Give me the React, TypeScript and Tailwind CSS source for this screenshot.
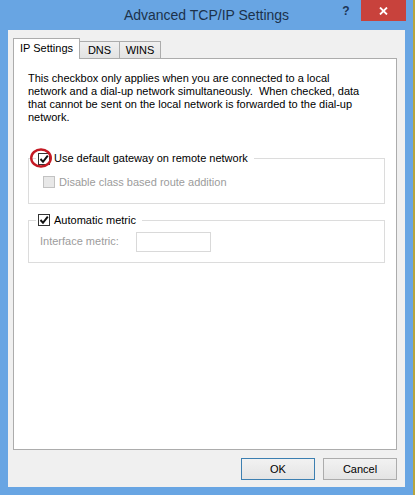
import React from 'react';

const FONT = { fontFamily: '"Liberation Sans", Arial, sans-serif' };

function Box({ checked, disabled }: { checked?: boolean; disabled?: boolean }) {
  return (
    <span
      className={`w-[12px] h-[12px] shrink-0 border flex items-center justify-center ${
        disabled ? 'border-[#c2c2c2] bg-[#e8e8e8]' : 'border-[#333333] bg-white'
      }`}
    >
      {checked && (
        <svg width="10" height="10" viewBox="0 0 10 10">
          <path d="M1.5 5 L4 7.8 L8.8 1.6" stroke="#111" strokeWidth="2" fill="none" />
        </svg>
      )}
    </span>
  );
}

export default function App() {
  return (
    <div className="w-[415px] h-[495px] flex bg-[#b7a53c] text-[11px] text-black" style={FONT}>
      <div className="w-[413px] h-full flex flex-col bg-[#68a5e3]">
        {/* title bar */}
        <div className="h-[30px] shrink-0 grid grid-cols-[1fr_auto_1fr]">
          <div />
          <div className="pt-[7px] text-[14px] leading-[16px] text-[#1c324b]">Advanced TCP/IP Settings</div>
          <div className="flex justify-end items-start pr-[7px]">
            <div className="w-[26px] h-[21px] flex items-center justify-center text-[12px] font-bold text-[#1d3557] mr-[2px] pt-[1px]">?</div>
            <div className="w-[45px] h-[21px] bg-[#c8423c] flex items-center justify-center">
              <svg width="9" height="8" viewBox="0 0 9 8">
                <path d="M1 0.5 L8 7.5 M8 0.5 L1 7.5" stroke="#fff" strokeWidth="1.8" />
              </svg>
            </div>
          </div>
        </div>

        {/* client */}
        <div className="flex-1 mx-[8px] mb-[8px] bg-[#f0f0f0] flex flex-col pt-[8px] pl-[5px] pr-[8px]">
          <div className="h-[20px] flex items-end">
            <div className="w-[67px] h-[21px] -mb-px relative z-10 bg-white border border-b-0 border-[#acacac] flex items-center justify-center pb-[1px]">
              IP Settings
            </div>
            <div className="w-[40px] h-[17px] bg-gradient-to-b from-[#f0f0f0] to-[#e3e3e3] border-t border-r border-[#acacac] flex items-center justify-center pt-[1px]">
              DNS
            </div>
            <div className="w-[41px] h-[17px] bg-gradient-to-b from-[#f0f0f0] to-[#e3e3e3] border-t border-r border-[#acacac] flex items-center justify-center pt-[1px]">
              WINS
            </div>
          </div>

          <div className="h-[392px] bg-white border border-[#acacac] pt-[13px] pl-[14px] pr-[11px]">
            <p className="leading-[13px] whitespace-pre">
              {'This checkbox only applies when you are connected to a local\n'}
              {'network and a dial-up network simultaneously.  When checked, data\n'}
              {'that cannot be sent on the local network is forwarded to the dial-up\n'}
              {'network.'}
            </p>

            <fieldset className="mt-[28px] border border-[#dcdcdc] p-0 m-0 min-w-0">
              <legend className="ml-[7px] px-[2px] flex items-center h-[13px]">
                <span className="relative flex">
                  <Box checked />
                  <svg
                    className="absolute left-[-8px] top-[-6px]"
                    width="24"
                    height="22"
                    viewBox="0 0 24 22"
                  >
                    <ellipse cx="11" cy="11" rx="9.8" ry="8.5" stroke="#c41a24" strokeWidth="2.4" fill="none" />
                  </svg>
                </span>
                <span className="ml-[4px] pr-[4px]">Use default gateway on remote network</span>
              </legend>
              <div className="flex items-center pl-[14px] pt-[9px] pb-[12px] text-[#9c9c9c]">
                <Box disabled />
                <span className="ml-[4px]">Disable class based route addition</span>
              </div>
            </fieldset>

            <fieldset className="mt-[10px] border border-[#dcdcdc] p-0 m-0 min-w-0">
              <legend className="ml-[7px] px-[2px] flex items-center h-[13px]">
                <Box checked />
                <span className="ml-[4px] pr-[4px]">Automatic metric</span>
              </legend>
              <div className="flex items-center pl-[11px] pt-[5px] pb-[10px] text-[#9c9c9c]">
                <span className="w-[96px]">Interface metric:</span>
                <div className="w-[75px] h-[20px] border border-[#d9d9d9] bg-white" />
              </div>
            </fieldset>
          </div>

          <div className="flex justify-end gap-[8px] mt-[8px] pr-0">
            <button className="w-[74px] h-[22px] border border-[#3c7fb1] bg-gradient-to-b from-[#f2f2f2] to-[#e4e4e4]">
              OK
            </button>
            <button className="w-[74px] h-[22px] border border-[#acacac] bg-gradient-to-b from-[#f2f2f2] to-[#e4e4e4]">
              Cancel
            </button>
          </div>
        </div>
      </div>
      <div className="flex-1" />
    </div>
  );
}
